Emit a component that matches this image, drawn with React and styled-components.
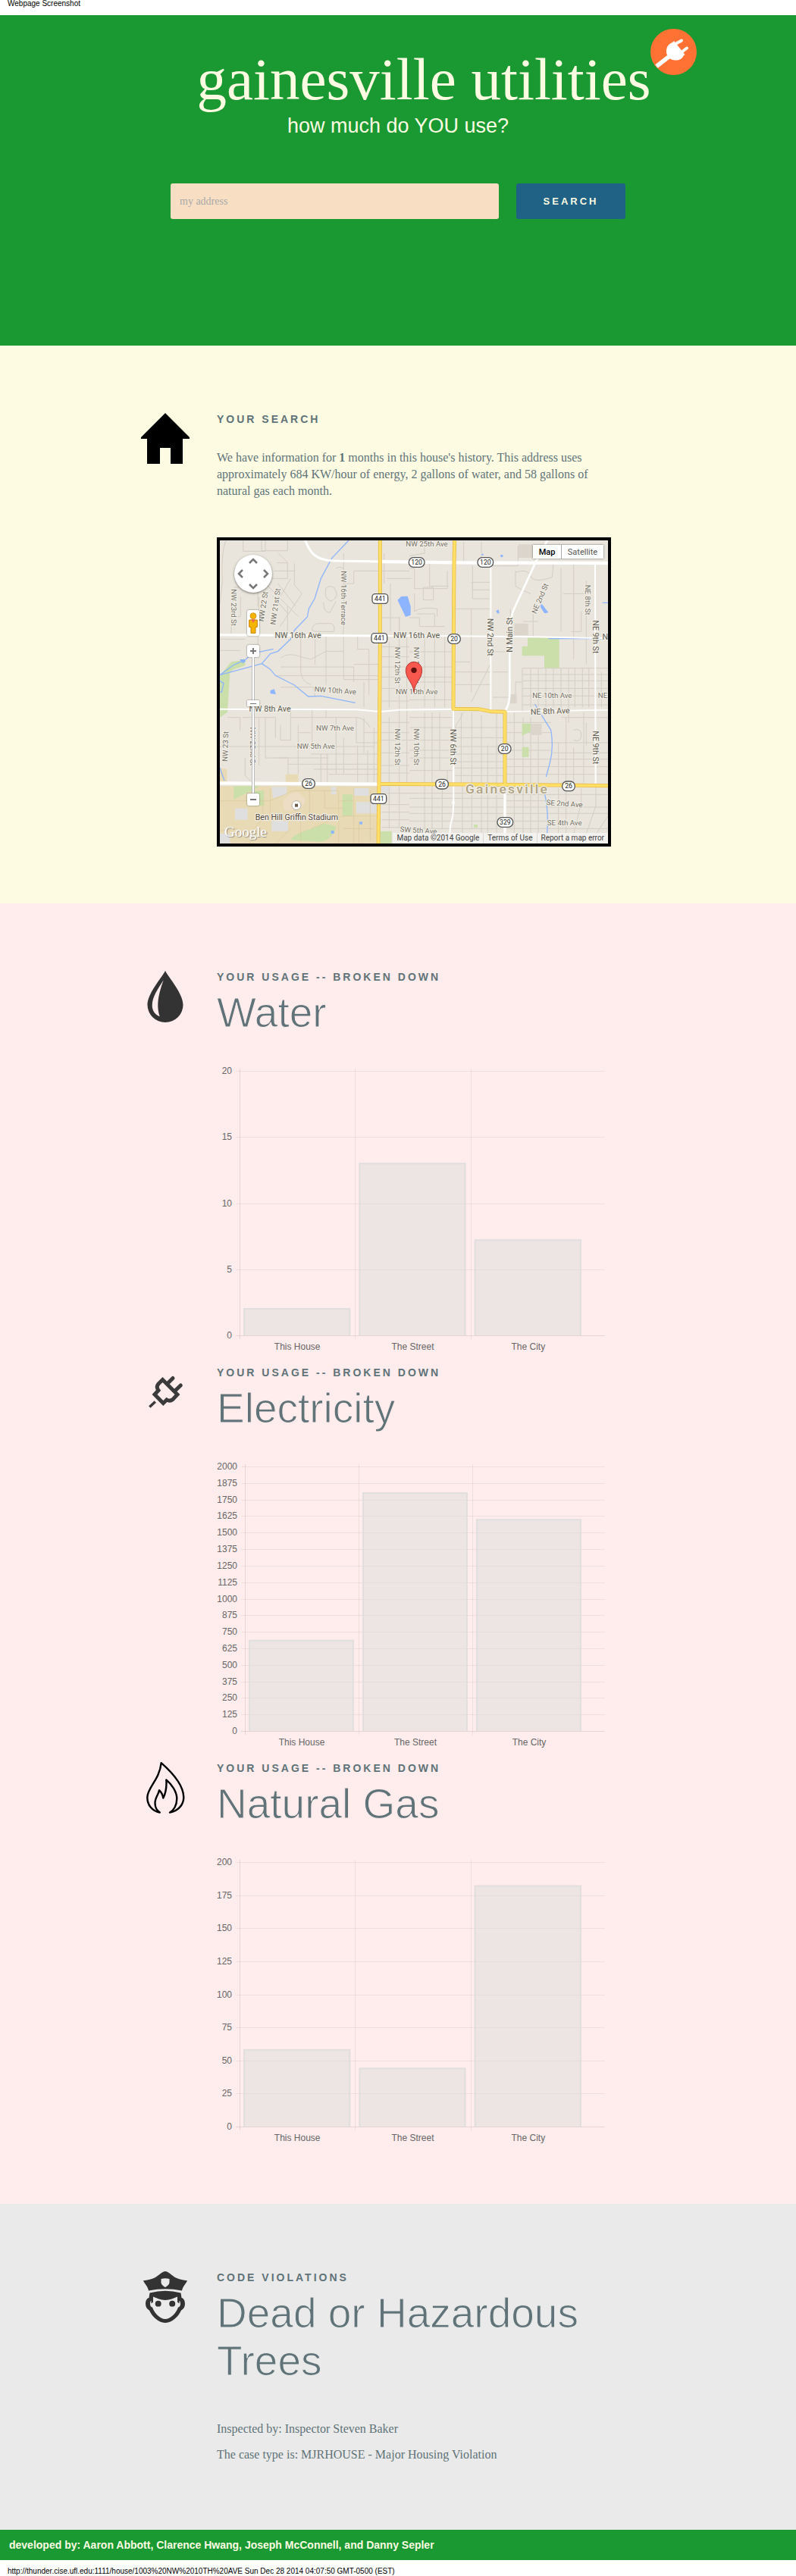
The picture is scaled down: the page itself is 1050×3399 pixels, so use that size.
import React from "react";
import styled, { createGlobalStyle } from "styled-components";

const sans = '"Liberation Sans", Arial, sans-serif';
const serif = '"Liberation Serif", "Times New Roman", serif';
const mapFont = 'Roboto, "Liberation Sans", sans-serif';

const color = {
  green: "#1a9831",
  cream: "#fdfce3",
  pink: "#ffecec",
  gray: "#eaeaea",
  ink: "#5f7378",
};

const Global = createGlobalStyle`
  *, *::before, *::after { box-sizing: border-box; }
  body { margin: 0; background: #fff; font-family: ${serif}; }
  h1, h2, h3, p, figure { margin: 0; }
`;

const PrintNote = styled.p`
  padding: ${(p) => (p.$end ? "10px 10px 1px" : "0 10px 11px")};
  font: 10px/9px ${sans};
  color: #000;
`;

/* ---------- hero ---------- */

const Hero = styled.header`
  display: flex;
  flex-direction: column;
  align-items: center;
  padding: 45px 20px 167px;
  background: ${color.green};
  color: ${color.cream};
`;

const Brand = styled.div`
  position: relative;
  margin-left: 68px;
`;

const BrandName = styled.h1`
  font: 400 79px/80px ${serif};
  white-space: nowrap;
`;

const BrandBadge = styled.svg`
  position: absolute;
  top: -27px;
  right: -61px;
  width: 61px;
  height: 61px;
`;

const Tagline = styled.p`
  margin-top: 5px;
  font: 27px/32px ${sans};
`;

const SearchForm = styled.form`
  display: flex;
  gap: 23px;
  width: 100%;
  max-width: 600px;
  margin-top: 60px;
`;

const AddressInput = styled.input`
  flex: 1;
  min-width: 0;
  height: 47px;
  padding: 0 12px;
  border: 0;
  border-radius: 3px;
  background: #f8dfc3;
  color: #555;
  font: 14px ${serif};
  &::placeholder { color: #a9a9a9; opacity: 1; }
`;

const SearchButton = styled.button`
  width: 144px;
  height: 47px;
  border: 0;
  border-radius: 3px;
  background: #1f6286;
  color: ${color.cream};
  font: 700 13px ${sans};
  letter-spacing: 3px;
  text-transform: uppercase;
`;

/* ---------- sections ---------- */

const Band = styled.section`
  padding: 89px 20px ${(p) => p.$bottom}px;
  background: ${(p) => p.$bg};
  color: ${color.ink};
`;

const Block = styled.div`
  display: grid;
  grid-template-columns: 68px minmax(0, 520px);
  column-gap: 34px;
  width: 100%;
  max-width: 682px;
  margin: 0 auto;
  & + & { margin-top: 12px; }
`;

const Glyph = styled.svg`
  width: 68px;
  height: 68px;
`;

const Eyebrow = styled.h3`
  font: 700 14px/16px ${sans};
  letter-spacing: 3px;
  text-transform: uppercase;
`;

const Heading = styled.h2`
  margin-top: 8px;
  font: 400 55px/63px ${sans};
  -webkit-text-stroke: 1px ${(p) => p.$bg};
`;

const Copy = styled.div`
  margin-top: ${(p) => p.$top}px;
  font: 16px/22px ${serif};
  p + p { margin-top: 12px; }
`;

/* ---------- charts ---------- */

const ChartSvg = styled.svg`
  display: block;
  width: 100%;
  margin-top: 37px;
  font: 12px ${sans};
  fill: #666;
`;

const TOP = 8;
const PLOT = 349;
const RIGHT = 512;
const LAST_BAR_END = 487;

function BarChart({ title, max, step, axis, values }) {
  const col = (LAST_BAR_END - axis) / 3;
  const names = ["This House", "The Street", "The City"];
  const ticks = [];
  for (let v = 0; v <= max; v += step) ticks.push(v);
  const y = (v) => TOP + PLOT - (v / max) * PLOT;
  return (
    <ChartSvg viewBox="0 0 520 386" role="img" aria-label={title}>
      {ticks.map((v) => {
        const ty = Math.round(y(v)) + 0.5;
        return (
          <g key={v}>
            <path d={`M${axis - 5} ${ty}H${RIGHT}`} stroke={v ? "rgba(0,0,0,.06)" : "rgba(0,0,0,.1)"} />
            <text x={axis - 10} y={ty + 3.5} textAnchor="end">{v}</text>
          </g>
        );
      })}
      {names.map((name, i) => {
        const x = axis + col * i;
        const h = (values[i] / max) * PLOT;
        return (
          <g key={name}>
            <path d={`M${Math.round(x) + 0.5} ${TOP - 3}V${TOP + PLOT + 5}`} stroke={i ? "rgba(0,0,0,.06)" : "rgba(0,0,0,.1)"} />
            <path
              d={`M${x + 6} ${TOP + PLOT}v${-h}h${col - 13}v${h}`}
              fill="rgba(220,220,220,.5)"
              stroke="rgba(220,220,220,.8)"
              strokeWidth="2"
            />
            <text x={x + col / 2} y="376" textAnchor="middle">{name}</text>
          </g>
        );
      })}
    </ChartSvg>
  );
}

/* ---------- icons ---------- */

const HouseIcon = () => (
  <Glyph viewBox="0 0 68 68" aria-hidden="true">
    <path d="M34 0 66 32v2h-9v33H41V46H27v21H10V34H2v-2z" fill="#000" />
  </Glyph>
);

const DropIcon = () => (
  <Glyph viewBox="0 0 68 68" aria-hidden="true">
    <path d="M34 0C28 11 10.500 30 10.500 45a23.500 23 0 0 0 47 0C57.500 30 40 11 34 0Z" fill="#333" />
    <path d="M31.700 12.300C25 23 16.700 34 16.700 45.700c0 7 4 12 10 14.600C23 48 23 36 31.700 12.300Z" fill={color.pink} />
  </Glyph>
);

const PlugIcon = () => (
  <Glyph viewBox="0 0 68 68" aria-hidden="true" fill="none" stroke="#3b3b3b">
    <path d="M30.500 17.500 50 37 44 43.500Q40 46.500 36 44L31.300 48.500 20 37 25 31.500Q21.500 27 25 23Z" strokeWidth="5" />
    <path d="M37 22.500 44 15.500M47 32 54.300 25" strokeWidth="5" strokeLinecap="round" />
    <path d="M13.300 53.500 20.800 46.500" strokeWidth="3.500" />
  </Glyph>
);

const FlameIcon = () => (
  <Glyph viewBox="0 0 68 68" aria-hidden="true" fill="none" stroke="#000" strokeWidth="2.400" strokeLinejoin="round" strokeLinecap="round">
    <path d="M26.700 66.500C17 65 10.300 57 10.300 46.400 10.300 34 26.500 23 28.700 1.200 41 12 58 29 58.300 46.400 58.300 57 50 65 40 66.500 45 64 49.300 57 49.300 48.300 49.300 39 42 29 35.300 23.400 36 32 35 40 31.300 47.500 30.500 43 29 39.500 26 37.200 25 43 20.500 47 20.500 54 20.500 60 23 64 26.700 66.500" />
  </Glyph>
);

const OfficerIcon = () => (
  <Glyph viewBox="0 0 68 68" aria-hidden="true" fill="#333">
    <path fillRule="evenodd" d="M34 0C38 0 43 6 48 8.500 53 11 58 11.500 63 12.300 61 17 57 20 56 25.500Q34 21 12 25.500C11 20 7 17 5 12.300 10 11.500 15 11 20 8.500 25 6 30 0 34 0ZM28.500 10v4.500c0 3 3 5 5.500 6.500 2.500-1.500 5.500-3.500 5.500-6.500V10Q34 8.500 28.500 10Z" />
    <path fillRule="evenodd" d="M13.500 28.500Q34 23 54.500 28.500L55.500 35C58 35.500 60 38.500 60 43c0 4-2 7-5 8.500C52 59 43 68 34 68S16 59 13 51.500C10 50 8 47 8 43c0-4.500 2-7.500 4.500-8ZM18 35v5.500l-2.500 2V39c-2 0-2.500 8 1.500 8.500C19.500 55 27 63 34 63s14.500-8 17-15.500c4-.500 3.500-8.500 1.500-8.500v3.500L50 40.500V33.500C45 35.500 40 38 34 38S23 35.500 18 33.500Z" />
    <ellipse cx="24.700" cy="42.700" rx="4" ry="3.900" />
    <ellipse cx="43.200" cy="42.700" rx="4" ry="3.900" />
  </Glyph>
);

/* ---------- map ---------- */

const MapFrame = styled.figure`
  position: relative;
  margin-top: 50px;
  border: 4px solid #000;
  overflow: hidden;
  background: #e9e5dc;
`;

const MapSvg = styled.svg`
  display: block;
  width: 100%;
  font-family: ${mapFont};
`;

const Pan = styled.div`
  position: absolute;
  left: 19px;
  top: 19px;
  display: grid;
  grid-template: repeat(3, 1fr) / repeat(3, 1fr);
  width: 50px;
  height: 50px;
  border-radius: 50%;
  background: #fff;
  box-shadow: 0 1px 3px rgba(0, 0, 0, 0.5);
`;

const PanButton = styled.button`
  grid-area: ${(p) => p.$area};
  display: grid;
  place-items: center;
  padding: 0;
  border: 0;
  background: none;
  svg { width: 12px; height: 12px; transform: rotate(${(p) => p.$turn}deg); }
`;

const ZoomBar = styled.div`
  position: absolute;
  left: 35px;
  top: 92px;
  display: flex;
  flex-direction: column;
  align-items: center;
  width: 18px;
`;

const mapButton = `
  display: grid;
  place-items: center;
  padding: 0;
  border: 0;
  border-radius: 2px;
  background: #fff;
  box-shadow: 0 0 2px rgba(0, 0, 0, 0.6);
`;

const Pegman = styled.button`
  ${mapButton}
  width: 16px;
  height: 34px;
  margin-bottom: 12px;
`;

const ZoomButton = styled.button`
  ${mapButton}
  width: 16px;
  height: 16px;
`;

const ZoomSlider = styled.input`
  appearance: none;
  writing-mode: vertical-lr;
  direction: rtl;
  width: 16px;
  height: 180px;
  margin: 0;
  background: linear-gradient(#fff, #fff) center / 2px 100% no-repeat, linear-gradient(#bbb, #bbb) center / 4px 100% no-repeat;
  &::-webkit-slider-thumb {
    appearance: none;
    width: 16px;
    height: 8px;
    border: 0;
    border-radius: 1px;
    background: linear-gradient(#777, #777) center / 8px 1px no-repeat, #fff;
    box-shadow: 0 0 2px rgba(0, 0, 0, 0.6);
  }
`;

const MapTypes = styled.div`
  position: absolute;
  top: 6px;
  right: 6px;
  display: flex;
  box-shadow: 0 0 2px rgba(0, 0, 0, 0.6);
`;

const MapType = styled.button`
  width: ${(p) => (p.$on ? 37 : 56)}px;
  height: 18px;
  padding: 0;
  border: 0;
  border-left: ${(p) => (p.$on ? "0" : "1px solid #aaa")};
  background: #fff;
  color: ${(p) => (p.$on ? "#000" : "#555")};
  font: ${(p) => (p.$on ? 500 : 400)} 11px ${mapFont};
`;

const Logo = styled.span`
  position: absolute;
  left: 6px;
  bottom: 5px;
  color: #fff;
  font: 19px/20px ${serif};
  text-shadow: 1px 1px 1px #888;
`;

const Credits = styled.figcaption`
  position: absolute;
  right: 0;
  bottom: 0;
  display: flex;
  background: rgba(245, 245, 245, 0.75);
  color: #444;
  font: 10px/14px ${mapFont};
  > * { padding: 0 5px; color: inherit; text-decoration: none; }
  > * + * { border-left: 1px solid #d8d8d8; }
`;

const Chevron = () => (
  <svg viewBox="0 0 12 12" fill="none" stroke="#777" strokeWidth="2.500" aria-hidden="true">
    <path d="M1 9 6 4 11 9" />
  </svg>
);

const SmallStreets = () => (
  <g fill="none" stroke="#d3cec3" strokeWidth="3">
    <g transform="translate(-30 -39)">
      <path d="M55 39Q35 80 40 200L30 290M122 39V82H210V39M195 39V80H298V39M262 90 300 128M30 475H110M30 430H130M75 290V410M112 262V340L75 345M185 262 180 460" />
      <path d="M255 128H298V190H230M245 160H330M325 130V215L355 250 268 380M210 210 340 340M260 210 330 300M240 260 300 330M310 190 270 260M298 300V410M85 225H180V300" />
      <path d="M520 90V380L518 412M660 160H560V210H520M450 230Q440 270 470 280 510 260 480 225 460 215 450 230M440 285Q440 325 465 325L490 280M395 395Q395 365 430 368H470Q490 380 480 400H410Z" />
      <path d="M270 505Q300 480 350 500L390 510 450 478H520M270 540H560V600M350 420V560Q355 600 390 610M407 420V530M450 420V610M520 420V590H660M250 575H660M270 620H400L408 660M575 420V470H620V650M560 530H660M600 600V700M490 150Q500 140 520 150" />
      <path d="M310 710V830H270V770M310 740H450M395 710V850M450 710V740H570V840M340 800H390M490 740V965M520 820V965M340 770V965M210 740V900H300V990M120 740H250V820M30 855H250M250 855H640M390 885H660M430 885V995M455 885V995M575 850V995M600 740V880M615 870V995M640 780V995M570 740Q600 740 625 780M600 800H660M570 840H660M260 900H460M300 925H660M400 945H660M460 965H660M130 900V970L160 1000M185 740V930M60 740H110V790" />
      <path d="M670 160H780M690 190H790M680 90V210M705 210V400M740 340V1000M670 345H740V400M670 460H780M670 500H780M670 540H780M670 580H780M670 625H780M670 675H780M770 420V1000M700 440V700M670 760H780M670 800H780M670 830H780M670 880H780M670 930H780M670 960H780M700 740V1000M670 1040H780M670 1085H780M670 1115H780M670 1145H780M670 1175H780M700 1010V1180M740 1010V1180" />
    </g>
    <g transform="translate(750 -39)">
      <path d="M0 100 60 90V60M0 150H20V230H150V160M55 225H95V275H55ZM20 250V320Q50 300 110 310V340M80 130V220H155M30 330H100V380M0 345H40V380H140M250 140V235H320M245 205H320V270H250V205M180 310H320M215 45V125M285 45V125M430 60V140H330M420 160V220Q450 240 480 250M420 165Q470 150 480 180T565 185L570 130" />
      <path d="M245 310V640M180 520H240M180 560H320M180 610H320M330 480H390M330 560H390M320 530 245 680M330 660H420V600H445M60 420V700M100 420V700M140 420V700M0 480H170M0 540H170M0 580H170M0 600H170M0 670H170M400 310V400H470M490 330V420M450 360H510M650 130V510M600 150V400M680 320V400H640M700 200V530M610 250H700" />
      <path d="M447 545H786M447 570H786M447 595H786M447 625H786M447 655H786M447 690H786M480 545V700M510 545V700M540 545V700M570 545V700M600 545V720M630 545V760M655 545V700M685 545V700M710 545V700M447 545V720M760 560V700" />
      <path d="M0 740H170M0 780H170M0 830H170M0 870H170M0 900H170M0 950H170M60 720V1000M90 720V1000M120 720V950H150V990M215 720 180 780H375M180 820H375M180 855H375M180 885H375M180 915H375M180 940H375M180 970H375M205 720V1000M247 720V1180M285 730V1200M310 850V1200M345 720V1200" />
      <path d="M415 720V1200M450 740V1200M480 740V1200M510 800V1200M385 760H560M385 800H560M385 840H786M385 870H560M385 905H786M385 935H786M385 965H786M570 880H786M590 840V1000M620 740V1000M650 860V1000M690 720V1000M650 790Q680 780 680 810T650 830M700 760V850M600 740H786" />
      <path d="M0 1040H380M0 1060H380M0 1095H786M0 1120H786M0 1150H600M0 1180H786M385 1045H786M385 1070H560M60 1010V1180M90 1010V1200M130 1010V1180M210 1010V1200M590 1020V1200M620 1020V1200M680 1020V1080L650 1200M738 1010V1090L700 1200M786 1130 740 1200" />
    </g>
  </g>
);

const Areas = () => (
  <>
    <g transform="translate(-30 -39)">
      <path d="M30 1012H655L650 1240H30Z" fill="#e8dab4" />
      <path d="M290 965H340V1000H290ZM30 940 58 945V1000H30Z" fill="#e8dab4" />
      <path d="M30 575 75 520 130 512V535L85 550 70 560 60 720 30 740ZM85 1012H190L85 1065ZM155 1030H205V1090H155ZM515 1045H555V1130H515Z" fill="#cadfaa" />
      <path d="M310 1225C330 1190 400 1185 440 1160L490 1170C480 1220 440 1240 400 1230ZM665 1190H710V1240H665Z" fill="#cadfaa" />
      <path d="M235 1015H295V1045L240 1060ZM560 1020H620V1050H560ZM470 1015H490V1045H470ZM235 1150H300V1190H235ZM570 1075H650V1120H570ZM90 1100H140V1145H90ZM30 1200H70V1240H30ZM670 1010H700V1035H670Z" fill="#dfdfdf" />
      <path d="M280 1070Q330 1010 365 1060 370 1100 330 1105L285 1110Z" fill="#eeddc5" />
      <g stroke="#d9c99e" strokeWidth="2" fill="none">
        <path d="M30 1070H230L320 1030H500V1240M200 1060V1140L150 1200V1240M230 1020V1140M385 1020V1150L530 1130H655M445 1030V1100H520M560 1020V1240M625 1030V1230M390 1180 460 1150M520 1180H640M350 1130V1230M250 1240 310 1180M500 1070H560M580 1150V1240M30 1190 100 1180" />
      </g>
      <path d="M733 275 748 261 773 260 785 300V335L765 342Z" fill="#8db5ff" />
      <path d="M108 510 128 510 132 518 120 526ZM230 633 245 628 252 648 230 646ZM583 1153H594V1163H583ZM470 1188H482V1200H470Z" fill="#8db5ff" />
      <g fill="none" stroke="#8fb5fb" strokeWidth="4">
        <path d="M540 39 473 110 430 190 405 270 382 310 376 342 325 395 310 430 260 478 230 488 196 527 30 572" />
        <path d="M242 469 160 486 130 512 85 532 30 572M196 527 228 548 250 574 325 612 380 657 430 655 566 682M30 595 45 605 37 640 30 638M30 940 48 990" />
      </g>
    </g>
    <g transform="translate(750 -39)">
      <path d="M468 424H593V544H534V496H446V458H468ZM446 764H480V795L446 812ZM446 857H472V897H446ZM255 1164H270V1176H255ZM195 1215H215V1230H195Z" fill="#cadfaa" />
      <path d="M432 55H490V108H432ZM415 368H470V415H415ZM398 648H425V685H398ZM480 765H523V810H480Z" fill="#dbd5cc" />
      <path d="M513 295 525 292 550 325 535 328ZM343 318 353 313 356 328H348ZM361 96H370V105H361ZM286 92H293V98H286ZM0 295Q8 310 0 335Z" fill="#8db5ff" />
      <g fill="none" stroke="#8fb5fb" strokeWidth="4">
        <path d="M550 428H735L786 429M764 286H786M496 687 560 790Q572 860 556 920L541 975M535 1040Q552 1110 545 1200" />
      </g>
    </g>
  </>
);

const whiteRoads = [
  [9, "M338 0C355 45 375 78 450 81L634 84"],
  [13, "M634 84 930 88 1536 90"],
  [9, "M0 374 634 378"],
  [6, "M634 378 930 379 1250 382 1536 388"],
  [6, "M0 668 540 670 634 678 710 671 924 668"],
  [5, "M1128 678 1486 672 1536 672"],
  [6, "M1072 91V673"],
  [8, "M1296 0 1250 86 1165 270Q1148 300 1147 400V600Q1147 650 1130 673"],
  [6, "M1485 91 1487 966"],
  [6, "M924 668 925 1038 922 1090 912 1130 908 1200"],
  [10, "M1128 965V1200"],
  [13, "M0 961 625 965"],
];

const yellowRoads = "M634 0V390L632 680 630 960 627 1200M929 0 927 90 925 380 924 667 1025 668 1070 677 1128 679V966M625 964 1000 966 1536 971";

const shields = [
  ["441", 634, 231], ["441", 631, 387], ["441", 628, 1023],
  ["120", 779, 87], ["120", 1051, 87], ["20", 927, 390], ["20", 1127, 825],
  ["26", 351, 963], ["26", 879, 965], ["26", 1380, 973], ["329", 1129, 1116],
];

const labels = [
  ["NW 16th Ave", 309, 377, 0, 1], ["NW 10th Ave", 457, 594, 4], ["NW 8th Ave", 198, 668, 0, 1],
  ["NW 7th Ave", 456, 743], ["NW 5th Ave", 380, 816], ["NW 25th Ave", 819, 13],
  ["NW 16th Ave", 779, 378, 0, 1], ["NW 10th Ave", 779, 598], ["NE 10th Ave", 1315, 614],
  ["NE", 1515, 614], ["N", 1525, 382, 0, 1], ["NE 8th Ave", 1307, 677, -2, 1],
  ["SE 2nd Ave", 1364, 1042, 4], ["SE 4th Ave", 1364, 1118], ["SW 5th Ave", 786, 1148, 4],
  ["NW 23rd St", 54, 266, 90], ["NW 22 St", 172, 262, -82], ["NW 21st St", 220, 262, -82],
  ["NW 16th Terrace", 490, 228, 90], ["NW 12th St", 703, 495, 90], ["NW 12th St", 703, 818, 90],
  ["NW 10th St", 778, 495, 90], ["NW 10th St", 778, 818, 90], ["NW 6th St", 923, 818, 90, 1],
  ["NW 2nd St", 1070, 383, 90, 1], ["N Main St", 1147, 374, -90, 1], ["NE 2nd St", 1267, 230, -67],
  ["NE 8th St", 1455, 236, 90], ["NE 9th St", 1485, 382, 90, 1], ["NE 9th St", 1486, 820, 90, 1],
  ["NW 23 St", 22, 816, -88], ["NW 22nd St", 130, 816, 90],
];

function StreetMap() {
  return (
    <MapFrame>
      <MapSvg viewBox="0 0 1536 1200" role="img" aria-label="Street map of Gainesville">
        <SmallStreets />
        <Areas />
        <g fill="none" stroke="#fff" strokeLinejoin="round">
          {whiteRoads.map(([w, d]) => <path key={d} d={d} strokeWidth={w} />)}
        </g>
        <circle cx="1486" cy="672" r="6" fill="#fff" />
        <circle cx="924" cy="1038" r="6" fill="#fff" />
        <path d={yellowRoads} fill="none" stroke="#e9be4c" strokeWidth="15" strokeLinejoin="round" />
        <path d={yellowRoads} fill="none" stroke="#ffdf66" strokeWidth="10" strokeLinejoin="round" />
        <g textAnchor="middle" stroke="#f1eee6" strokeWidth="7" strokeLinejoin="round" paintOrder="stroke">
          {labels.map(([t, x, y, turn = 0, major]) => (
            <text
              key={t + x + y}
              transform={`translate(${x} ${y}) rotate(${turn})`}
              y="10"
              fontSize={major ? 32 : 29}
              fill={major ? "#625e54" : "#77736a"}
            >
              {t}
            </text>
          ))}
          <text x="1137" y="1002" fontSize="52" fontWeight="500" letterSpacing="7" fill="#b0a384">Gainesville</text>
          <text x="304" y="1106" fontSize="32" fill="#5a4b3c">Ben Hill Griffin Stadium</text>
        </g>
        <circle cx="303" cy="1049" r="18" fill="#fff" stroke="#b9aea0" strokeWidth="3" />
        <path d="M297 1043h12v12h-12z" fill="#6b5848" />
        <g textAnchor="middle" fontSize="26" fill="#222">
          {shields.map(([t, x, y]) => {
            const w = t.length > 2 ? 62 : 50;
            return (
              <g key={t + x + y}>
                <rect x={x - w / 2} y={y - 19} width={w} height="38" rx={t === "441" ? 12 : 18} fill="#fff" stroke="#555" strokeWidth="4" />
                <text x={x} y={y + 9}>{t}</text>
              </g>
            );
          })}
        </g>
        <path d="M768 601C764 560 736 550 736 514a32 33 0 0 1 64 0C800 550 772 560 768 601Z" fill="#f9584e" stroke="#b5362e" strokeWidth="3" />
        <circle cx="768" cy="514" r="11" fill="#5d120e" />
      </MapSvg>
      <Pan>
        <PanButton type="button" aria-label="Pan up" $area="1 / 2" $turn={0}><Chevron /></PanButton>
        <PanButton type="button" aria-label="Pan left" $area="2 / 1" $turn={-90}><Chevron /></PanButton>
        <PanButton type="button" aria-label="Pan right" $area="2 / 3" $turn={90}><Chevron /></PanButton>
        <PanButton type="button" aria-label="Pan down" $area="3 / 2" $turn={180}><Chevron /></PanButton>
      </Pan>
      <ZoomBar>
        <Pegman type="button" aria-label="Street view">
          <svg width="12" height="28" viewBox="0 0 36 84" aria-hidden="true">
            <path d="M2 30H34V58H27V82H9V58H2Z" fill="#f5b400" stroke="#c78200" strokeWidth="3" />
            <path d="M9 28H27L18 42Z" fill="#f0665a" />
            <circle cx="18" cy="14" r="12" fill="#f5b400" stroke="#c78200" strokeWidth="2" />
          </svg>
        </Pegman>
        <ZoomButton type="button" aria-label="Zoom in">
          <svg width="8" height="8" viewBox="0 0 8 8" aria-hidden="true"><path d="M0 4H8M4 0V8" stroke="#777" strokeWidth="2" /></svg>
        </ZoomButton>
        <ZoomSlider type="range" min="0" max="21" defaultValue="14" aria-label="Zoom level" />
        <ZoomButton type="button" aria-label="Zoom out">
          <svg width="8" height="8" viewBox="0 0 8 8" aria-hidden="true"><path d="M0 4H8" stroke="#777" strokeWidth="2" /></svg>
        </ZoomButton>
      </ZoomBar>
      <MapTypes>
        <MapType type="button" $on>Map</MapType>
        <MapType type="button">Satellite</MapType>
      </MapTypes>
      <Logo>Google</Logo>
      <Credits>
        <span>Map data ©2014 Google</span>
        <a href="#terms">Terms of Use</a>
        <a href="#report">Report a map error</a>
      </Credits>
    </MapFrame>
  );
}

/* ---------- footer ---------- */

const Footer = styled.footer`
  padding: 12px;
  background: ${color.green};
  color: ${color.cream};
  font: 700 14px/16px ${sans};
`;

const usage = [
  { name: "Water", Icon: DropIcon, max: 20, step: 5, axis: 30, values: [2, 13, 7.2] },
  { name: "Electricity", Icon: PlugIcon, max: 2000, step: 125, axis: 37, values: [684, 1800, 1597] },
  { name: "Natural Gas", Icon: FlameIcon, max: 200, step: 25, axis: 30, values: [58, 44, 182] },
];

export default function App() {
  return (
    <>
      <Global />
      <PrintNote>Webpage Screenshot</PrintNote>
      <Hero>
        <Brand>
          <BrandName>gainesville utilities</BrandName>
          <BrandBadge viewBox="0 0 61 61" aria-hidden="true">
            <circle cx="30.500" cy="30.500" r="30.500" fill="#ff7234" />
            <path d="M8 49.500 26 35.500" stroke="#fff" strokeWidth="5.500" />
            <path d="M33 20 41 15.500M41.500 30.500 48 25.500" stroke="#fff" strokeWidth="4" strokeLinecap="round" />
            <path d="M31 16 45.500 34 43.500 35.500C42 40 37 42 32 41.500 25 41 20.500 35 21 29 21.500 23 24 20 29 18Z" fill="#fff" />
          </BrandBadge>
        </Brand>
        <Tagline>how much do YOU use?</Tagline>
        <SearchForm onSubmit={(e) => e.preventDefault()}>
          <AddressInput type="text" placeholder="my address" aria-label="my address" />
          <SearchButton type="submit">Search</SearchButton>
        </SearchForm>
      </Hero>

      <Band $bg={color.cream} $bottom={75}>
        <Block>
          <HouseIcon />
          <div>
            <Eyebrow>Your search</Eyebrow>
            <Copy $top={32}>
              <p>
                We have information for <b>1</b> months in this house's history. This address uses
                approximately 684 KW/hour of energy, 2 gallons of water, and 58 gallons of natural gas each month.
              </p>
            </Copy>
            <StreetMap />
          </div>
        </Block>
      </Band>

      <Band $bg={color.pink} $bottom={73}>
        {usage.map(({ name, Icon, ...chart }) => (
          <Block key={name}>
            <Icon />
            <div>
              <Eyebrow>Your usage -- broken down</Eyebrow>
              <Heading $bg={color.pink}>{name}</Heading>
              <BarChart title={`${name} usage`} {...chart} />
            </div>
          </Block>
        ))}
      </Band>

      <Band $bg={color.gray} $bottom={88}>
        <Block>
          <OfficerIcon />
          <div>
            <Eyebrow>Code violations</Eyebrow>
            <Heading $bg={color.gray}>Dead or Hazardous Trees</Heading>
            <Copy $top={47}>
              <p>Inspected by: Inspector Steven Baker</p>
              <p>The case type is: MJRHOUSE - Major Housing Violation</p>
            </Copy>
          </div>
        </Block>
      </Band>

      <Footer>developed by: Aaron Abbott, Clarence Hwang, Joseph McConnell, and Danny Sepler</Footer>
      <PrintNote $end>http://thunder.cise.ufl.edu:1111/house/1003%20NW%2010TH%20AVE Sun Dec 28 2014 04:07:50 GMT-0500 (EST)</PrintNote>
    </>
  );
}
